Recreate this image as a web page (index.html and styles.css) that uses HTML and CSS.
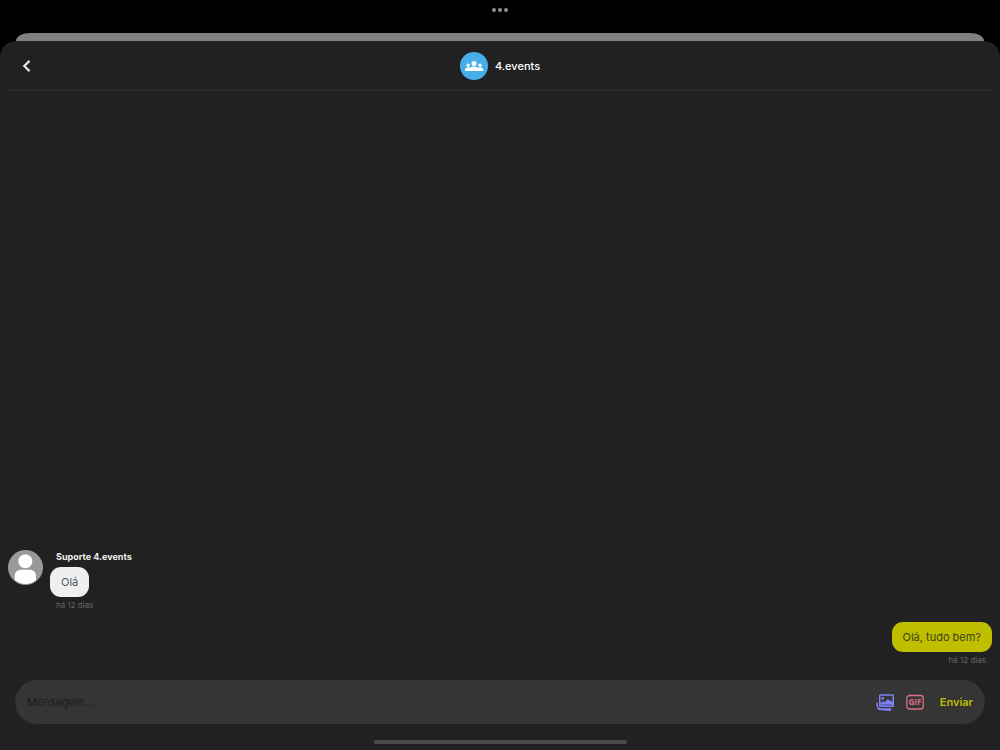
FILE: index.html
```html
<!DOCTYPE html>
<html lang="pt-BR">

<head>
    <meta charset="UTF-8">
    <meta name="viewport" content="width=device-width, initial-scale=1.0">
    <title>4.events</title>
    <link rel="stylesheet" href="styles.css">
</head>

<body>
    <div class="multitask">
        <span></span><span></span><span></span>
    </div>
    <div class="back-card"></div>

    <div class="sheet">
        <header class="header">
            <button class="back" type="button" aria-label="Voltar">
                <svg width="9" height="12" viewBox="0 0 9 12">
                    <path d="M7.500.9 2.300 6l5.200 5.100" fill="none" stroke="#e6e6e6" stroke-width="2.200" />
                </svg>
            </button>
            <h1 class="title">
                <svg width="28" height="28" viewBox="0 0 28 28">
                    <circle cx="14" cy="14" r="14" fill="#48aee9" />
                    <g fill="#fff">
                        <circle cx="14" cy="11.400" r="2.500" />
                        <circle cx="8.200" cy="13.200" r="1.700" />
                        <circle cx="20" cy="13.200" r="1.700" />
                        <path d="M9.300 19v-1.200c0-2.200 2.200-3.300 4.700-3.300s4.700 1.100 4.700 3.300V19z" />
                        <path d="M5 19v-1.200c0-1.500 1.400-2.500 3.200-2.500 1 0 1.800.3 2.300.8V19z" />
                        <path d="M23.300 19v-1.200c0-1.500-1.500-2.500-3.300-2.500-1 0-1.800.3-2.300.8V19z" />
                    </g>
                </svg>
                4.events
            </h1>
        </header>

        <main class="chat">
            <div class="message received">
                <svg class="avatar" width="35" height="35" viewBox="0 0 35 35">
                    <defs>
                        <clipPath id="round"><circle cx="17.500" cy="17.500" r="16.500" /></clipPath>
                    </defs>
                    <circle cx="17.500" cy="17.500" r="17.500" fill="#999" />
                    <g fill="#fff" clip-path="url(#round)">
                        <circle cx="17.300" cy="11.300" r="7" />
                        <path d="M6.700 35v-9c0-4 2.500-6.300 6.500-6.300h8.300c4 0 6.500 2.300 6.500 6.300v9z" />
                    </g>
                </svg>
                <div class="content">
                    <strong class="author">Suporte 4.events</strong>
                    <p class="bubble">Olá</p>
                    <time class="time">há 12 dias</time>
                </div>
            </div>
            <div class="message sent">
                <div class="content">
                    <p class="bubble">Olá, tudo bem?</p>
                    <time class="time">há 12 dias</time>
                </div>
            </div>
        </main>

        <form class="composer">
            <input type="text" placeholder="Mensagem..." aria-label="Mensagem">
            <button class="icon" type="button" aria-label="Foto">
                <svg width="18" height="17" viewBox="0 0 18 17" fill="#7f80f5">
                    <path d="M2 8 .5 9.200c-.4.400-.5.900-.3 1.400l1.400 4.500c.2.600.7.900 1.400 1l10.500.8c.8.100 1.400-.4 1.600-1.200l.3-1.500H4.500C3 14.200 2 13 2 11.500z" />
                    <path fill-rule="evenodd" d="M4.400.3h12.200c.8 0 1.400.6 1.400 1.400v10c0 .8-.6 1.400-1.400 1.400H4.400c-.8 0-1.400-.6-1.400-1.400v-10C3 .9 3.600.3 4.400.3zM4.500 1.800v7.200L7 7.300l1.700 1L12 4.900l1.700 2 1-.6 1.800 2V1.800z" />
                    <circle cx="6.900" cy="4.300" r="1.400" />
                    <path d="M4.700 11.400c1-.9 1.600-.9 2.500 0 1-.9 1.700-.9 2.600 0 1-.9 1.700-.9 2.600 0 1-.9 1.900-.9 3.800 0" fill="none" stroke="#353535" stroke-width=".7" />
                </svg>
            </button>
            <button class="icon" type="button" aria-label="GIF">
                <svg width="18" height="16" viewBox="0 0 18 16">
                    <rect x=".8" y="1.500" width="16.400" height="13.500" rx="2.500" fill="none" stroke="#dd6f89" stroke-width="1.300" />
                    <text class="gif" x="9" y="11" text-anchor="middle">GIF</text>
                </svg>
            </button>
            <button class="send" type="button">Enviar</button>
        </form>
        <div class="home-bar"></div>
    </div>
</body>

</html>
```

FILE: styles.css
```css
* {
    box-sizing: border-box;
}

body {
    display: flex;
    flex-direction: column;
    min-height: 100vh;
    margin: 0;
    background: #000;
    color: #f0f0f0;
    font-family: Inter, "Open Sans", sans-serif;
    font-size: 11px;
}

button {
    padding: 0;
    border: 0;
    background: none;
    font: inherit;
    cursor: pointer;
}

svg {
    display: block;
}

.multitask {
    display: flex;
    justify-content: center;
    gap: 2px;
    height: 33px;
    padding-top: 8px;
}

.multitask span {
    width: 4px;
    height: 4px;
    border-radius: 50%;
    background: #909090;
}

.back-card {
    height: 8px;
    margin: 0 16px;
    border-radius: 14px 14px 0 0 / 8px 8px 0 0;
    background: #808080;
}

.sheet {
    display: flex;
    flex: 1;
    flex-direction: column;
    border-radius: 16px 16px 0 0;
    background: #212121;
}

/* header */

.header {
    display: grid;
    grid-template-columns: 1fr auto 1fr;
    align-items: center;
    height: 50px;
    margin: 0 8px;
    border-bottom: 1px solid #303030;
}

.back {
    justify-self: start;
    padding: 8px 14px;
}

.title {
    display: flex;
    align-items: center;
    gap: 7px;
    margin: 0;
    color: #fff;
    font-size: 11px;
    font-weight: 500;
}

/* messages */

.chat {
    display: flex;
    flex: 1;
    flex-direction: column;
    justify-content: flex-end;
    gap: 9px;
    padding: 0 8px 12px;
}

.message {
    display: flex;
    gap: 7px;
}

.content {
    display: flex;
    flex-direction: column;
    align-items: flex-start;
}

.author {
    margin-bottom: 3px;
    padding: 0 6px;
    font-size: 9px;
    font-weight: 700;
    line-height: 14px;
}

.bubble {
    margin: 0;
    padding: 0 11px;
    border-radius: 11px;
    background: #efefef;
    color: #4d5a66;
    line-height: 30px;
}

.time {
    padding: 0 6px;
    color: #666;
    font-size: 8px;
    line-height: 16px;
}

.sent {
    justify-content: flex-end;
}

.sent .content {
    align-items: flex-end;
}

.sent .bubble {
    background: #bfbf00;
    color: #3d3d1c;
}

/* composer */

.composer {
    display: flex;
    align-items: center;
    height: 44px;
    margin: 0 15px 16px;
    padding: 0 12px;
    border-radius: 22px;
    background: #353535;
}

.composer input {
    flex: 1;
    min-width: 0;
    padding: 0;
    border: 0;
    outline: 0;
    background: none;
    color: #f0f0f0;
    font: inherit;
}

.composer input::placeholder {
    color: #1c1c1c;
    opacity: 1;
}

.icon {
    margin-right: 12px;
}

.gif {
    fill: #dd6f89;
    font-family: "Open Sans", sans-serif;
    font-size: 8px;
    font-weight: 700;
}

.send {
    margin-left: 4px;
    color: #bfbf00;
    font-weight: 600;
}

.home-bar {
    width: 253px;
    height: 4px;
    margin: 0 auto 6px;
    border-radius: 2px;
    background: #4b4b4b;
}
```
